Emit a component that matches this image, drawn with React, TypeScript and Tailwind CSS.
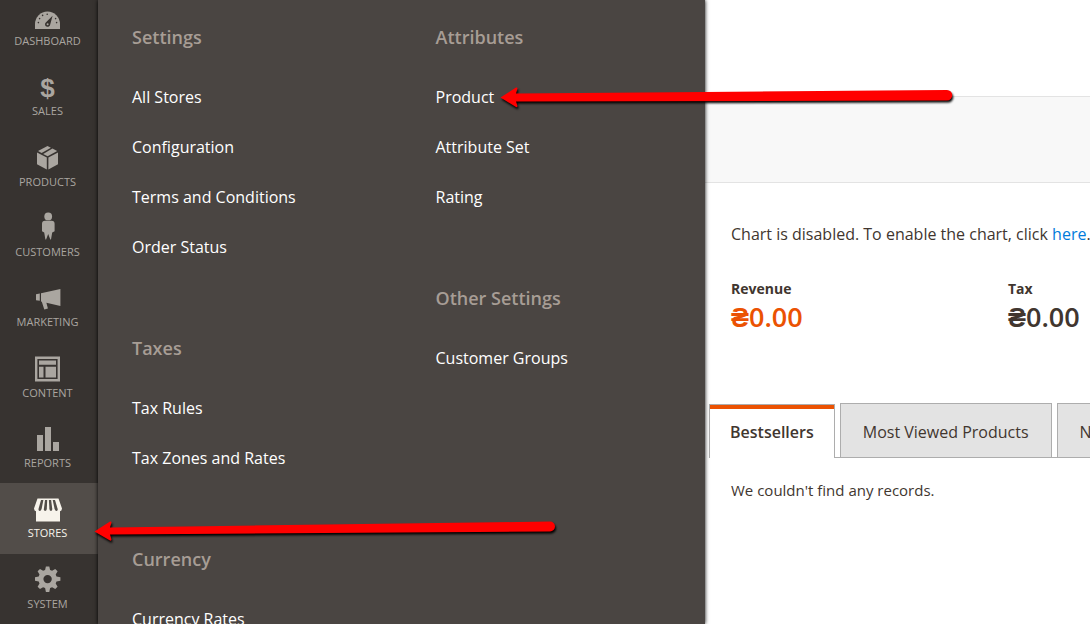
import { ReactNode } from "react";

const navItems: { label: string; icon: ReactNode }[] = [
  {
    label: "Dashboard",
    icon: (
      <>
        <path d="M1 26v-5a12.5 12.5 0 0 1 25 0v5z" />
        <g fill="#373330">
          <circle cx="4.4" cy="19.6" r="0.8" />
          <circle cx="5.6" cy="15.6" r="0.8" />
          <circle cx="8.6" cy="12.4" r="0.8" />
          <circle cx="13.2" cy="11.2" r="0.8" />
          <circle cx="21.6" cy="15.6" r="0.8" />
          <circle cx="22.6" cy="19.6" r="0.8" />
          <path d="M18.6 12.800l-2.400 8.800a2.600 2.600 0 1 1-4.400-2.200z" />
        </g>
        <circle cx="13.600" cy="21.200" r="1" />
      </>
    ),
  },
  {
    label: "Sales",
    icon: (
      <text x="13.5" y="24" textAnchor="middle" className="font-['Liberation_Sans'] text-[26px] font-bold">
        $
      </text>
    ),
  },
  {
    label: "Products",
    icon: (
      <>
        <path d="M13.5 2l3.4 1.7-9.3 5.2-3.6-1.9z" />
        <path d="M18.4 4.6l4.8 2.4-9.6 5.2-4.4-2.3z" />
        <path d="M3 8.6l9.8 5v12L3 20.2z" />
        <path d="M24 8.6l-9.6 5v12l9.6-5.4z" />
      </>
    ),
  },
  {
    label: "Customers",
    icon: (
      <>
        <circle cx="14.2" cy="2.4" r="3.9" />
        <path d="M11 6.8h6.600a3 3 0 0 1 3 3v7.400l-2.400 1.200-1.200 7.100h-.7l-2.100-5.600-2.100 5.600h-.7L10.200 18.400l-2.200-1.200V9.800a3 3 0 0 1 3-3z" />
      </>
    ),
  },
  {
    label: "Marketing",
    icon: (
      <>
        <path d="M2 10.200l3.800-.6v7.200L2 16.200z" />
        <path d="M7 9.300l19.400-4.300v17L12.400 18.800l1.500 5.600-3.600 1.100L7.800 17.700 7 17.500z" />
      </>
    ),
  },
  {
    label: "Content",
    icon: (
      <>
        <path fillRule="evenodd" d="M1 1.500h25v25H1zM3.400 3.900v20.200h20.200V3.900z" />
        <path d="M5 5.500h17v4.200H5zM5 11.800h4.500v10.700H5zM11.500 11.800H22v10.700H11.500z" />
      </>
    ),
  },
  {
    label: "Reports",
    icon: <path d="M3 10h6v16H3zM11 2h6v24h-6zM19 17h6v9h-6z" />,
  },
  {
    label: "Stores",
    icon: (
      <>
        <path d="M3.500 3.500h21L28 13.500q-.2 2.500-2 2.800V26.500H2V16.300q-1.800-.3-2-2.800z" />
        <g fill="#524d49">
          <path d="M7 5h2.400L7.600 14q-.6 2-2 2-1.300-.3-1.100-2z" />
          <path d="M11 5h2.200l-.4 9q-.3 2-1.700 2-1.300-.3-1.200-2z" />
          <path d="M14.900 5h2.200l1.200 9q0 1.700-1.200 2-1.500 0-1.700-2z" />
          <path d="M18.700 5H21l2.700 9q.2 1.700-1.100 2-1.500 0-2-2z" />
        </g>
      </>
    ),
  },
  {
    label: "System",
    icon: (
      <path
        fillRule="evenodd"
        d="M11.900 .5h3.400l.8 3.500 2 .8 3.100-1.900 2.400 2.400-1.900 3.100.8 2 3.900.9v3.400l-3.900.9-.8 2 1.900 3.100-2.400 2.400-3.100-1.900-2 .8-.8 4h-3.400l-.8-4-2-.8-3.100 1.900-2.400-2.400 1.900-3.100-.8-2-3.700-.9v-3.400l3.700-.9.8-2-1.900-3.100 2.400-2.400 3.100 1.900 2-.8zM13.600 8.900a4.200 4.200 0 1 0 0 8.400 4.200 4.200 0 0 0 0-8.400z"
      />
    ),
  },
];

const menuColumns = [
  [
    { title: "Settings", links: ["All Stores", "Configuration", "Terms and Conditions", "Order Status"] },
    { title: "Taxes", links: ["Tax Rules", "Tax Zones and Rates"] },
    { title: "Currency", links: ["Currency Rates"] },
  ],
  [
    { title: "Attributes", links: ["Product", "Attribute Set", "Rating"] },
    { title: "Other Settings", links: ["Customer Groups"] },
  ],
];

function Sidebar({ active }: { active: string }) {
  return (
    <nav className="-mt-[9px] flex w-[98px] shrink-0 flex-col bg-[#373330]">
      {navItems.map(({ label, icon }) => (
        <a
          key={label}
          href="#"
          className={`flex flex-1 flex-col items-center pt-3 pr-[3px] ${
            label === active ? "bg-[#524d49] text-[#f7f3eb]" : "text-[#aaa6a0]"
          }`}
        >
          <svg viewBox="0 0 28 28" className="h-7 w-7 overflow-visible" fill="currentColor" aria-hidden="true">
            {icon}
          </svg>
          <span className="mt-0.5 text-[11px] leading-4 uppercase">{label}</span>
        </a>
      ))}
    </nav>
  );
}

function StoresMenu() {
  return (
    <div className="z-10 grid w-[607px] shrink-0 grid-cols-2 bg-[#4a4542] pt-[27px] shadow-[0_0_4px_#000000]">
      {menuColumns.map((sections, i) => (
        <div key={i} className="flex flex-col gap-[66px] pl-[34px]">
          {sections.map(({ title, links }) => (
            <section key={title}>
              <h2 className="mb-[25px] text-[18px] leading-5 font-semibold text-[#a79d95]">{title}</h2>
              <ul>
                {links.map((link) => (
                  <li key={link} className="flex h-[50px] items-center">
                    <a href="#" className="text-base text-white">
                      {link}
                    </a>
                  </li>
                ))}
              </ul>
            </section>
          ))}
        </div>
      ))}
    </div>
  );
}

function Total({ label, color }: { label: string; color: string }) {
  return (
    <div className="w-[277px] shrink-0">
      <div className="text-sm leading-5 font-bold">{label}</div>
      <div className={`text-[27px] leading-9 font-semibold ${color}`}>₴0.00</div>
    </div>
  );
}

function Tabs() {
  const idle = "-mb-px h-[55px] shrink-0 border border-[#adadad] bg-[#e3e3e3] px-[22px] pt-0.5 whitespace-nowrap";
  return (
    <div role="tablist" className="mt-[68px] ml-1 flex items-end">
      <button
        role="tab"
        aria-selected="true"
        className="h-[54px] shrink-0 border-x border-t border-[#adadad] bg-white font-semibold"
      >
        <span className="flex h-full items-center border-t-4 border-[#eb5202] px-5 pb-1">Bestsellers</span>
      </button>
      <div className="flex flex-1 gap-[5px] border-b border-[#adadad] pl-[5px]">
        <button role="tab" aria-selected="false" className={idle}>
          Most Viewed Products
        </button>
        <button role="tab" aria-selected="false" className={idle}>
          New Customers
        </button>
      </div>
    </div>
  );
}

export default function App() {
  return (
    <div className="relative flex h-screen overflow-hidden bg-white font-['Open_Sans',sans-serif] text-[#41362f]">
      <Sidebar active="Stores" />
      <StoresMenu />
      <main className="min-w-0 flex-1 overflow-hidden">
        <div className="mt-24 h-[87px] border-y border-[#e3e3e3] bg-[#f8f8f8]" />
        <p className="mt-[39px] pl-[26px] leading-6 whitespace-nowrap">
          Chart is disabled. To enable the chart, click{" "}
          <a href="#" className="text-[#007bdb]">
            here
          </a>
          .
        </p>
        <div className="mt-[33px] flex pl-[26px]">
          <Total label="Revenue" color="text-[#eb5202]" />
          <Total label="Tax" color="text-[#41362f]" />
        </div>
        <Tabs />
        <p className="mt-5 pl-[26px] text-[15px] leading-6">We couldn't find any records.</p>
      </main>

      {/* Pointer arrows drawn over the page */}
      <svg
        className="pointer-events-none absolute top-[80px] left-[499px] z-20 h-8 w-[460px] drop-shadow-[1px_2px_1px_#000000]"
        viewBox="0 0 460 32"
        fill="#ff0000"
      >
        <path d="M1.500 17.500L17 7.500q1.500-.5 1.500 1l-1.500 5L448 10a5 5 0 0 1 0 10.500L17 21.500l1.500 4.500q0 1.500-1.500 1z" />
      </svg>
      <svg
        className="pointer-events-none absolute top-[515px] left-[93px] z-20 h-8 w-[470px] drop-shadow-[1px_2px_1px_#000000]"
        viewBox="0 0 470 32"
        fill="#ff0000"
      >
        <path d="M1.500 16.500L17 6.500q1.500-.5 1.500 1l-1.500 5L457 6.500a5 5 0 0 1 0 10L17 19.500l1.500 5q0 1.500-1.500 1z" />
      </svg>
    </div>
  );
}
